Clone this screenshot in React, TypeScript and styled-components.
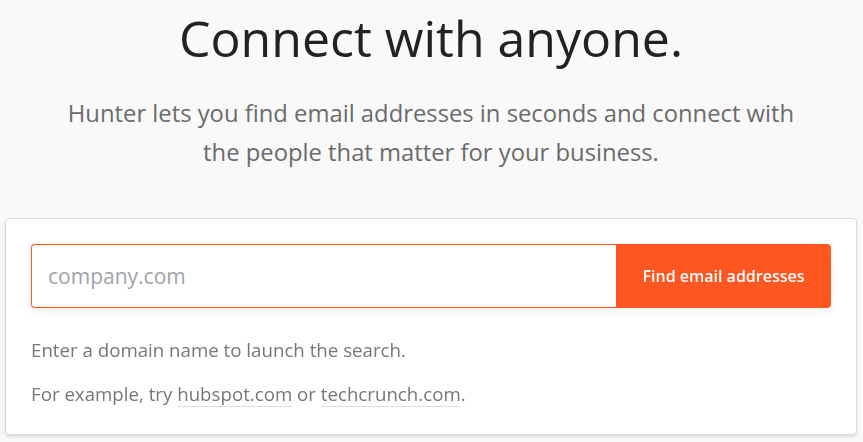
import React from "react";
import styled, { createGlobalStyle } from "styled-components";

const Global = createGlobalStyle`
  html, body { margin: 0; padding: 0; background: #f9f9f9; }
  body { font-family: "Open Sans", "Noto Sans", sans-serif; }
  * { box-sizing: border-box; }
`;

const Page = styled.div`
  width: 863px;
  height: 442px;
  overflow: hidden;
  display: flex;
  flex-direction: column;
  align-items: center;
  padding: 0 6px 0 5px;
`;

const Title = styled.h1`
  margin: 5px 0 0;
  font-size: 50px;
  font-weight: 400;
  line-height: 66px;
  color: #222;
  text-align: center;
  white-space: nowrap;
`;

const Lead = styled.p`
  margin: 22.5px 0 0;
  font-size: 23.8px;
  line-height: 39px;
  color: #6b6b6b;
  text-align: center;
  white-space: nowrap;
`;

const Card = styled.div`
  margin-top: 46.5px;
  align-self: stretch;
  background: #fff;
  border: 1px solid #dcdcdc;
  border-radius: 4px;
  box-shadow: 0 2px 3px rgba(0, 0, 0, 0.1);
  padding: 25px 25px 27px;
`;

const SearchRow = styled.div`
  display: flex;
  height: 64px;
  border-radius: 4px;
  box-shadow: 0 3px 12px rgba(0, 0, 0, 0.06);
`;

const DomainInput = styled.input`
  flex: 1;
  min-width: 0;
  border: 1px solid #ff5722;
  border-right: none;
  border-radius: 4px 0 0 4px;
  padding: 0 16px;
  font-family: "Open Sans", sans-serif;
  font-size: 21px;
  color: #333;
  caret-color: #333;
  outline: none;
  &::placeholder { color: #9ea3aa; }
`;

const FindButton = styled.button`
  width: 215px;
  border: none;
  border-radius: 0 4px 4px 0;
  background: #ff5722;
  color: #fff;
  font-family: "Open Sans", sans-serif;
  font-size: 16px;
  font-weight: 600;
  cursor: pointer;
`;

const Hint = styled.p<{ $top: number }>`
  margin: ${(p) => p.$top}px 0 0;
  font-size: 18.7px;
  line-height: 26px;
  color: #777;
`;

const Example = styled.a`
  color: #777;
  text-decoration: none;
  border-bottom: 1px solid #ddd;
  padding-bottom: 0;
`;

export default function App() {
  return (
    <>
      <Global />
      <Page>
        <Title>Connect with anyone.</Title>
        <Lead>
          Hunter lets you find email addresses in seconds and connect with
          <br />
          the people that matter for your business.
        </Lead>
        <Card>
          <SearchRow>
            <DomainInput placeholder="company.com" autoFocus />
            <FindButton>Find email addresses</FindButton>
          </SearchRow>
          <Hint $top={29}>Enter a domain name to launch the search.</Hint>
          <Hint $top={18}>
            For example, try <Example href="#">hubspot.com</Example> or{" "}
            <Example href="#">techcrunch.com</Example>.
          </Hint>
        </Card>
      </Page>
    </>
  );
}
